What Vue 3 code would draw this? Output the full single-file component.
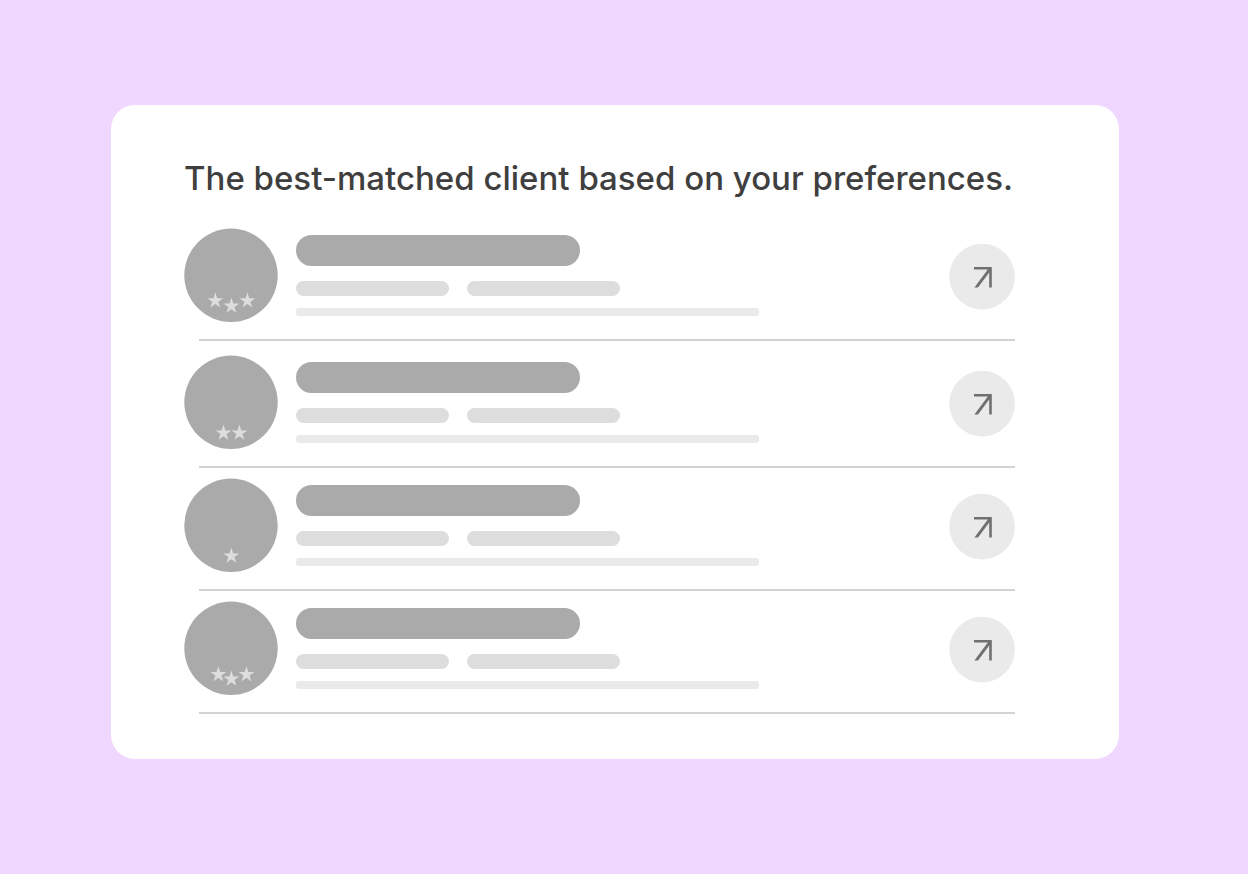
<script setup>
import { ref } from "vue"

// Star centres inside the 94x94 avatar
const clients = ref([
  { id: 1, stars: [[31.3, 71.8], [47.4, 77], [63.4, 71.8]] },
  { id: 2, stars: [[39.5, 77], [55.4, 77]] },
  { id: 3, stars: [[47.4, 77]] },
  { id: 4, stars: [[34.4, 72.6], [47.4, 77], [62.5, 72.6]] }
])

const selected = ref(null)

function starPoints([cx, cy]) {
  const points = []
  for (let i = 0; i < 10; i++) {
    const r = i % 2 ? 3.2 : 8.4
    const angle = (Math.PI / 5) * i - Math.PI / 2
    points.push(`${(cx + r * Math.cos(angle)).toFixed(2)},${(cy + r * Math.sin(angle)).toFixed(2)}`)
  }
  return points.join(" ")
}

function openClient(id) {
  selected.value = id
}
</script>

<template>
  <main class="page">
    <section class="card">
      <h1 class="title">The best-matched client based on your preferences.</h1>

      <ul class="clients">
        <li v-for="client in clients" :key="client.id" class="client">
          <div class="row">
            <svg class="avatar" viewBox="0 0 94 94" aria-hidden="true">
              <circle cx="47" cy="46.3" r="46.7" fill="#aaaaaa" />
              <polygon
                v-for="(star, i) in client.stars"
                :key="i"
                :points="starPoints(star)"
                fill="#dddddd"
              />
            </svg>

            <div class="details">
              <div class="bar name"></div>
              <div class="tags">
                <div class="bar tag"></div>
                <div class="bar tag"></div>
              </div>
              <div class="bar summary"></div>
            </div>

            <button
              type="button"
              class="open"
              :aria-label="`Open client ${client.id}`"
              @click="openClient(client.id)"
            >
              <svg viewBox="0 0 66 66" aria-hidden="true">
                <circle cx="33.1" cy="32.6" r="32.8" fill="#eaeaea" />
                <path
                  d="M25 23H42.8V43.4H40.2V28.4L29 43.4H25.4L38.8 25.5H25Z"
                  fill="#707070"
                />
              </svg>
            </button>
          </div>
        </li>
      </ul>
    </section>
  </main>
</template>

<style>
body {
  margin: 0;
  background: #efd7ff;
}
</style>

<style scoped>
.page {
  padding: 105px 129px 115px 111px;
  font-family: Inter, "Open Sans", sans-serif;
}

.card {
  padding: 52px 104px 45px 73px;
  background: #fff;
  border-radius: 24px;
}

.title {
  margin: 0 0 30px;
  font-size: 33px;
  line-height: 42px;
  font-weight: 500;
  color: #3f3f3f;
}

.clients {
  margin: 0;
  padding: 0;
  list-style: none;
}

.client + .client {
  margin-top: 11px;
}

.client:nth-child(2) {
  margin-top: 15px;
}

.client::after {
  content: "";
  display: block;
  height: 2px;
  margin: 16px 0 0 15px;
  background: #d3d3d3;
}

.row {
  display: flex;
  align-items: flex-start;
}

.avatar {
  flex: none;
  width: 94px;
  height: 94px;
  overflow: visible;
}

.details {
  flex: 1;
  min-width: 0;
  padding: 6px 0 0 18px;
}

.bar {
  max-width: 100%;
  border-radius: 16px;
}

.name {
  width: 284px;
  height: 31px;
  background: #aaaaaa;
}

.tags {
  display: flex;
  gap: 18px;
  margin: 15px 0 12px;
}

.tag {
  width: 153px;
  height: 15px;
  background: #dddddd;
}

.summary {
  width: 463px;
  height: 8px;
  border-radius: 3px;
  background: #eaeaea;
}

.open {
  flex: none;
  width: 66px;
  height: 66px;
  margin-top: 15px;
  padding: 0;
  border: 0;
  border-radius: 50%;
  background: none;
  cursor: pointer;
}

.open svg {
  display: block;
  width: 66px;
  height: 66px;
  overflow: visible;
}
</style>
